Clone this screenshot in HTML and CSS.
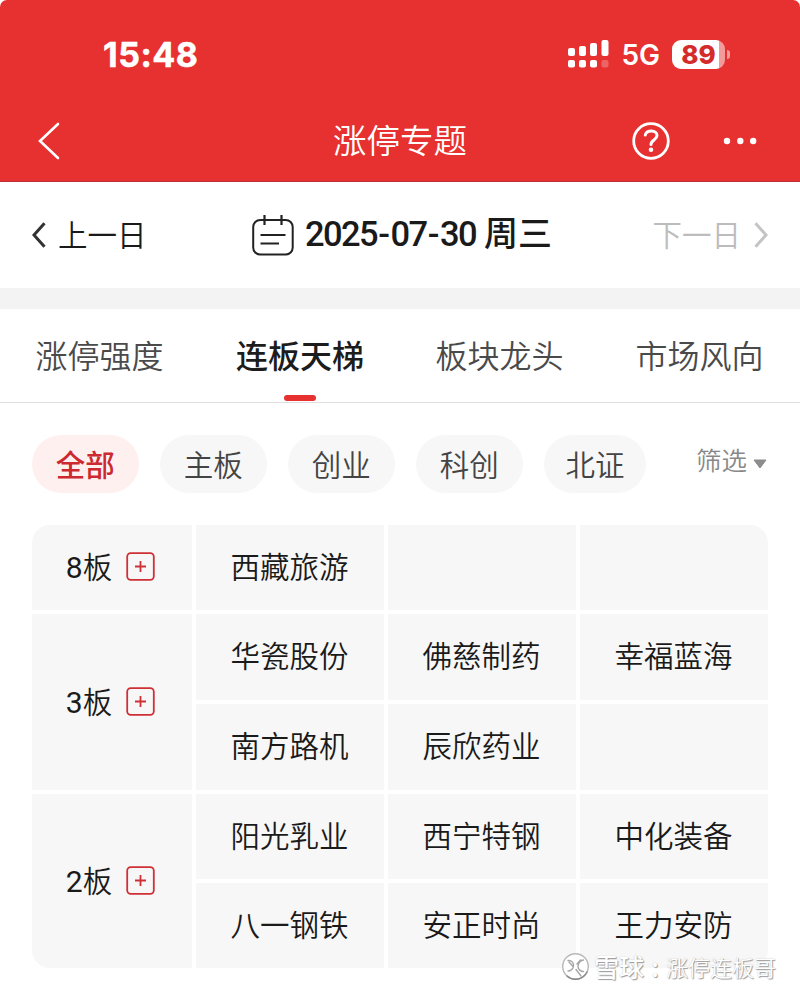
FILE: index.html
```html
<!DOCTYPE html>
<html lang="zh-CN">
<head>
<meta charset="utf-8">
<title>涨停专题</title>
<link rel="stylesheet" href="styles.css">
</head>
<body>
<header class="header">
  <div class="status">
    <span class="time">15:48</span>
    <div class="status-right">
      <svg class="signal" width="42" height="30" viewBox="0 0 42 30" fill="#fff">
        <rect x="0" y="9" width="7" height="8" rx="2"/><rect x="11" y="7" width="7" height="10" rx="2"/><rect x="22" y="4" width="7" height="13" rx="2"/><rect x="33.500" y="1" width="7" height="16" rx="2"/>
        <rect x="0" y="21" width="7" height="7.500" rx="2"/><rect x="11" y="21" width="7" height="7.500" rx="2"/><rect x="22" y="21" width="7" height="7.500" rx="2"/><rect x="33.500" y="21" width="7" height="7.500" rx="2" opacity=".25"/>
      </svg>
      <span class="net">5G</span>
      <span class="battery">89</span>
      <span class="battery-tip"></span>
    </div>
  </div>
  <nav class="titlebar">
    <svg class="back" width="22" height="38" viewBox="0 0 22 38" fill="none" stroke="#fff" stroke-width="2.600" stroke-linecap="round"><path d="M20 2 2 19 20 36"/></svg>
    <h1 class="title">涨停专题</h1>
    <div class="actions">
      <svg width="38" height="38" viewBox="0 0 38 38" fill="none" stroke="#fff" stroke-width="2.800" stroke-linecap="round"><circle cx="19" cy="19" r="17.300"/><path d="M13.300 13C14.500 7.500 25 7.500 25 13.500c0 4.500-6 4.500-6 9" stroke-width="3"/><circle cx="19" cy="27.800" r="2.300" fill="#fff" stroke="none"/></svg>
      <svg width="34" height="8" viewBox="0 0 34 8" fill="#fff"><circle cx="4" cy="4" r="3.200"/><circle cx="17.300" cy="4" r="3.200"/><circle cx="30.200" cy="4" r="3.200"/></svg>
    </div>
  </nav>
</header>
<section class="datebar">
  <div class="day prev"><svg width="14" height="26" viewBox="0 0 14 26" fill="none" stroke="#333" stroke-width="3"><path d="M12.500 1.200 2 13l10.500 11.800"/></svg><span>上一日</span></div>
  <div class="date">
    <svg width="42" height="42" viewBox="0 0 42 42" fill="none" stroke="#222" stroke-width="2"><rect x="1.200" y="6" width="39.500" height="34.500" rx="7"/><path d="M12.500 1v10M29.500 1v10M8.500 21h25M8.500 29.500h18.500" stroke-width="2.200"/></svg>
    <span class="digits">2025<i>-</i>07<i>-</i>30</span><span class="week">周三</span>
  </div>
  <div class="day next"><span>下一日</span><svg width="14" height="26" viewBox="0 0 14 26" fill="none" stroke="#c4c4c4" stroke-width="3"><path d="M1.500 1.200 12 13 1.500 24.800"/></svg></div>
</section>
<nav class="tabs">
  <span class="tab">涨停强度</span><span class="tab active">连板天梯</span><span class="tab">板块龙头</span><span class="tab">市场风向</span>
</nav>
<div class="filters">
  <span class="chip on">全部</span><span class="chip">主板</span><span class="chip">创业</span><span class="chip">科创</span><span class="chip small">北证</span>
  <span class="more">筛选<svg width="14" height="10" viewBox="0 0 14 10"><path d="M1 1h12L7 9z" fill="#8c8c8c" stroke="#8c8c8c" stroke-linejoin="round"/></svg></span>
</div>
<main class="ladder">
  <div class="level"><span><b>8</b>板</span><svg class="plus" viewBox="0 0 29 29"><rect x="1.200" y="1.200" width="26.600" height="26.600" rx="3.500"/><path d="M9 14.500h11M14.500 9v11"/></svg></div>
  <div>西藏旅游</div><div></div><div></div>
  <div class="level double"><span><b>3</b>板</span><svg class="plus" viewBox="0 0 29 29"><rect x="1.200" y="1.200" width="26.600" height="26.600" rx="3.500"/><path d="M9 14.500h11M14.500 9v11"/></svg></div>
  <div>华瓷股份</div><div>佛慈制药</div><div>幸福蓝海</div>
  <div>南方路机</div><div>辰欣药业</div><div></div>
  <div class="level double"><span><b>2</b>板</span><svg class="plus" viewBox="0 0 29 29"><rect x="1.200" y="1.200" width="26.600" height="26.600" rx="3.500"/><path d="M9 14.500h11M14.500 9v11"/></svg></div>
  <div>阳光乳业</div><div>西宁特钢</div><div>中化装备</div>
  <div>八一钢铁</div><div>安正时尚</div><div>王力安防</div>
</main>
<div class="watermark">
  <svg width="29" height="29" viewBox="0 0 29 29" fill="none" stroke="#a6a6a6" stroke-width="1.400" stroke-linecap="round"><circle cx="14.500" cy="14.500" r="12.800" fill="#fff" stroke="#b8b8b8"/><path d="M6 24a12.800 12.800 0 0 0 20-4" stroke="#888"/><path d="M7 8.500c4-.5 6 3 5.500 6S9 19 7 19M8 10l4 4.500M22.500 8c-3 0-5.500 3.500-5.500 6.500s3 5 5.500 5M15 17.500l5 6.500M16 12l3.500-4"/></svg>
  <span class="brand">雪球<i>:</i></span><span>涨停连板哥</span>
</div>
</body>
</html>
```
FILE: styles.css
```css
* { box-sizing: border-box; }
body {
  margin: 0;
  width: 800px;
  height: 992px;
  overflow: hidden;
  position: relative;
  background: #fff;
  color: #1a1a1a;
  font-family: "Noto Sans CJK SC", sans-serif;
  font-weight: 350;
}
svg { display: block; flex: none; }

.header {
  height: 182px;
  background: #e73030;
  border-bottom: 1px solid #bd3035;
  border-radius: 7px 7px 0 0;
  color: #fff;
}
.status {
  height: 100px;
  padding: 8px 70px 0 103px;
  display: flex;
  align-items: center;
  justify-content: space-between;
  font-family: Inter, sans-serif;
}
.time { font-size: 34px; font-weight: 700; letter-spacing: 0.5px; -webkit-text-stroke: 0.5px #fff; }
.status-right { display: flex; align-items: center; }
.net { margin-left: 11px; padding-top: 2px; font-size: 28px; font-weight: 600; }
.battery {
  width: 53px;
  height: 29px;
  margin-left: 12px;
  border-radius: 9px;
  background: linear-gradient(90deg, #fff 89%, #f39a9a 89%);
  color: #d42b2b;
  font-size: 26px;
  font-weight: 800;
  line-height: 29px;
  text-align: center;
}
.battery-tip { width: 3px; height: 9px; margin-left: 2px; border-radius: 0 4px 4px 0; background: #f39a9a; }
.titlebar {
  height: 81px;
  padding: 0 43px 0 38px;
  display: grid;
  grid-template-columns: 1fr auto 1fr;
  align-items: center;
}
.title { margin: -3px 0 0 5px; font-size: 33.5px; line-height: 48px; font-weight: 350; }
.actions { display: flex; align-items: center; justify-content: flex-end; gap: 53px; }

.datebar {
  height: 106px;
  padding: 0 32px;
  display: grid;
  grid-template-columns: 1fr auto 1fr;
  align-items: center;
}
.day { display: flex; align-items: center; gap: 12px; font-size: 29.5px; line-height: 44px; }
.day span { margin-top: -5px; }
.next { justify-content: flex-end; gap: 13px; color: #bcbcbc; }
.date { display: flex; align-items: center; padding-left: 4px; font-size: 34px; line-height: 48px; }
.digits { margin: -2px 0 0 11px; font: 500 34.5px/48px Roboto, sans-serif; letter-spacing: -1.6px; }
.digits i { margin: 0 2px 0 1.3px; font-style: normal; }
.week { margin: -6px 0 0 8px; font-weight: 500; }

.tabs {
  height: 115px;
  border-top: 21px solid #f3f3f3;
  border-bottom: 1px solid #dedede;
  display: grid;
  grid-template-columns: repeat(4, 1fr);
}
.tab {
  display: flex;
  flex-direction: column;
  align-items: center;
  padding: 21px 1px 0 0;
  color: #4a4a4a;
  font-size: 32px;
  line-height: 48px;
}
.active { padding-right: 0; color: #1c1c1c; font-weight: 500; }
.active::after { content: ""; width: 32px; height: 6px; margin-top: 17px; border-radius: 3px; background: #e73030; }

.filters { display: flex; height: 122px; padding: 32px 33px 0 32px; gap: 21.5px; }
.chip {
  width: 106.5px;
  height: 58px;
  border-radius: 29px;
  background: #f7f7f7;
  color: #444;
  font-size: 29.5px;
  line-height: 56px;
  text-align: center;
}
.small { width: 102px; }
.on { background: #fff0f0; color: #cc2930; font-weight: 500; }
.more { display: flex; align-items: center; height: 47px; margin-left: auto; gap: 6px; color: #888; font-size: 25.5px; }
.more svg { margin-top: 10px; }

.ladder {
  width: 736px;
  margin-left: 32px;
  display: grid;
  grid-template-columns: 160px repeat(3, 188px);
  grid-template-rows: 85px 86px 86px 85px 85px;
  gap: 4px;
  border-radius: 18px;
  overflow: hidden;
  font-size: 29.5px;
  line-height: 44px;
}
.ladder > div { display: flex; align-items: center; justify-content: center; padding: 0 1px 6px 0; background: #f7f7f7; }
.ladder > .level { gap: 14px; padding: 0 3px 2px 0; }
.double { grid-row: span 2; }
.level b { font: 450 30px/44px Roboto, sans-serif; }
.plus { width: 29px; height: 29px; fill: none; stroke: #cf3036; stroke-width: 1.8; }

.watermark {
  position: absolute;
  left: 561px;
  top: 949px;
  display: flex;
  align-items: center;
  color: #fff;
  font-size: 22px;
  line-height: 34px;
  text-shadow: 1px 1px 1px #999, 0 0 1px #bbb;
}
.brand { margin-left: 4px; font-size: 25px; font-weight: 500; }
.brand i { display: inline-block; width: 22px; font-style: normal; text-align: center; }
```
